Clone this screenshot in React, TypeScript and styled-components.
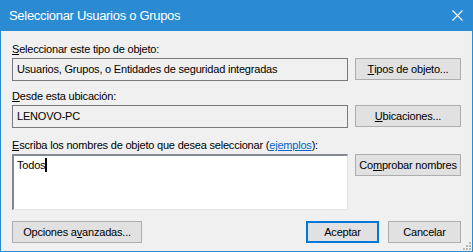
import { FC } from 'react';
import styled, { createGlobalStyle } from 'styled-components';

const GlobalStyle = createGlobalStyle`
html, body {
    margin: 0;
    padding: 0;
    background: #ffffff;
}
* {
    box-sizing: border-box;
}
`;

const Window = styled.div`
width: 473px;
height: 252px;
border: 1px solid #2b8bd2;
border-top: none;
background: #f0f0f0;
display: flex;
flex-direction: column;
font-family: "Liberation Sans", Arial, sans-serif;
font-size: 11px;
letter-spacing: -0.2px;
color: #000000;
position: relative;
`;

const TitleBar = styled.div`
height: 31px;
margin: 0 -1px;
background: #2b8bd2;
color: #ffffff;
display: flex;
align-items: center;
padding: 0 10px 1px 9px;
font-size: 13px;
letter-spacing: -0.3px;

span{
    margin-right: auto;
}
`;

const Body = styled.div`
flex: 1;
display: flex;
flex-direction: column;
padding: 11px 11px 0 11px;
`;

const Label = styled.div`
line-height: 15px;
height: 15px;
margin-bottom: 1px;

u{
    text-decoration: underline;
}
a{
    color: #0066cc;
    text-decoration: underline;
}
`;

const Row = styled.div<{ $gap?: number }>`
display: grid;
grid-template-columns: 1fr 106px;
column-gap: 7px;
align-items: start;
margin-bottom: ${p => p.$gap ?? 0}px;
`;

const ReadBox = styled.div`
height: 23px;
border: 1px solid #7a7a7a;
background: #f0f0f0;
padding: 0 4px;
line-height: 21px;
white-space: nowrap;
overflow: hidden;
`;

const NamesBox = styled.div`
height: 56px;
background: #ffffff;
border-top: 2px solid #828790;
border-left: 2px solid #828790;
border-right: 1px solid #e3e3e3;
border-bottom: 1px solid #e3e3e3;
padding: 2px 3px;
line-height: 14px;
display: flex;
align-items: flex-start;
`;

const Caret = styled.span`
display: inline-block;
width: 2px;
height: 14px;
background: #000000;
`;

const Button = styled.button<{ $primary?: boolean; $width?: number }>`
height: 22px;
width: ${p => (p.$width ? `${p.$width}px` : '100%')};
margin-top: ${p => (p.$primary ? 0 : 0)}px;
background: #e1e1e1;
border: ${p => (p.$primary ? '2px solid #0078d7' : '1px solid #adadad')};
font-family: inherit;
font-size: 11px;
letter-spacing: -0.2px;
color: #000000;
padding: 0;
display: flex;
align-items: center;
justify-content: center;
`;

const Footer = styled.div`
display: flex;
align-items: center;
gap: 9px;
margin-top: 11px;

button:first-child{
    margin-right: auto;
}
`;

const Grip = styled.svg`
position: absolute;
right: 1px;
bottom: 1px;
`;

const CloseIcon: FC = () => (
    <svg width="11" height="11" viewBox="0 0 11 11">
        <path d="M0.5 0.5 L10.5 10.5 M10.5 0.5 L0.5 10.5" stroke="#ffffff" strokeWidth="1.1" />
    </svg>
);

export default function App() {
    return (
        <>
            <GlobalStyle />
            <Window>
                <TitleBar>
                    <span>Seleccionar Usuarios o Grupos</span>
                    <CloseIcon />
                </TitleBar>
                <Body>
                    <Label><u>S</u>eleccionar este tipo de objeto:</Label>
                    <Row $gap={8}>
                        <ReadBox>Usuarios, Grupos, o Entidades de seguridad integradas</ReadBox>
                        <Button><u>T</u>ipos de objeto...</Button>
                    </Row>
                    <Label><u>D</u>esde esta ubicación:</Label>
                    <Row $gap={10}>
                        <ReadBox>LENOVO-PC</ReadBox>
                        <Button><u>U</u>bicaciones...</Button>
                    </Row>
                    <Label>
                        <u>E</u>scriba los nombres de objeto que desea seleccionar (<a href="#">ejemplos</a>):
                    </Label>
                    <Row>
                        <NamesBox>Todos<Caret /></NamesBox>
                        <Button>Co<u>m</u>probar nombres</Button>
                    </Row>
                    <Footer>
                        <Button $width={130}>Opciones a<u>v</u>anzadas...</Button>
                        <Button $primary $width={73}>Aceptar</Button>
                        <Button $width={73}>Cancelar</Button>
                    </Footer>
                </Body>
                <Grip width="9" height="9" viewBox="0 0 9 9">
                    {[[7, 1], [4, 4], [7, 4], [1, 7], [4, 7], [7, 7]].map(([x, y]) => (
                        <rect key={`${x}-${y}`} x={x} y={y} width="2" height="2" fill="#b8b8b8" />
                    ))}
                </Grip>
            </Window>
        </>
    );
}
